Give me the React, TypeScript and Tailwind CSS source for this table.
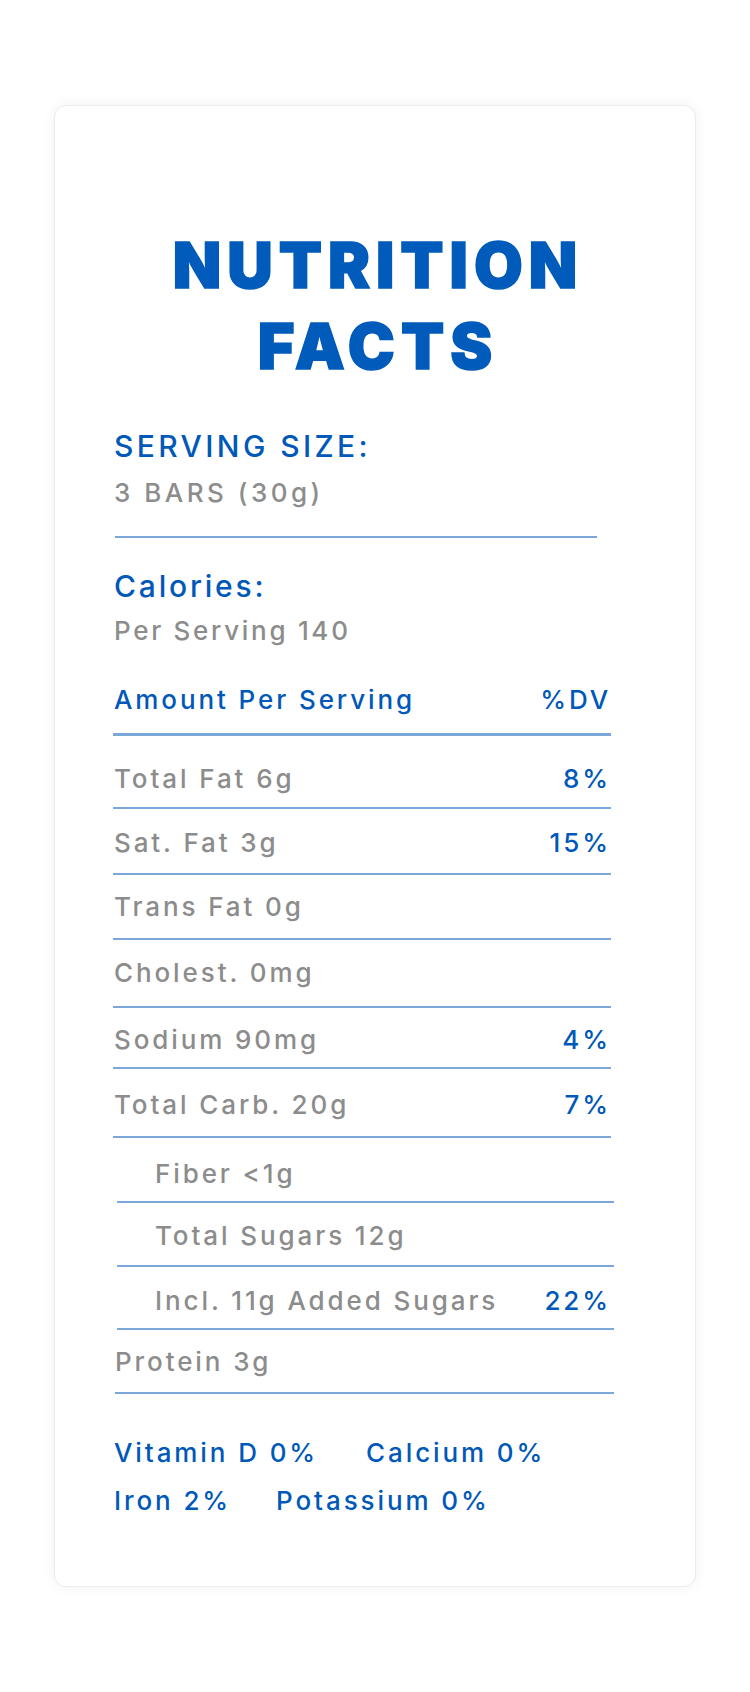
const rowsA = [
  { label: "Total Fat 6g", dv: "8%", h: "h-[73px] pt-[15px]" },
  { label: "Sat. Fat 3g", dv: "15%", h: "h-[66px] pt-[4px]" },
  { label: "Trans Fat 0g", dv: "", h: "h-[65px]" },
  { label: "Cholest. 0mg", dv: "", h: "h-[68px]" },
  { label: "Sodium 90mg", dv: "4%", h: "h-[61px] pt-[4px]" },
  { label: "Total Carb. 20g", dv: "7%", h: "h-[69px] pt-[4px]" },
];

const rowsB = [
  { label: "Fiber <1g", dv: "", h: "h-[65px] pt-[8px] pl-[38px]" },
  { label: "Total Sugars 12g", dv: "", h: "h-[64px] pt-[4px] pl-[38px]" },
  { label: "Incl. 11g Added Sugars", dv: "22%", h: "h-[63px] pt-[6px] pl-[38px]" },
  { label: "Protein 3g", dv: "", h: "h-[64px] pt-[2px] -ml-[2px]" },
];

const App = () => {
  return (
    <div className="min-h-[1692px] bg-white pt-[105px] pb-[105px] font-['Inter',sans-serif]">
      <section className="mx-[54px] h-[1482px] rounded-[12px] border border-[#ececec] bg-white shadow-[0_0_14px_rgba(0,0,0,0.06)] pl-[58px] pt-[119px]">
        <h1 className="pr-[58px] pl-[6px] text-center text-[63px] leading-[81px] font-black tracking-[6px] text-[#005bbb] [-webkit-text-stroke:1.5px_#005bbb]">
          NUTRITION
          <br />
          FACTS
        </h1>

        <div className="mt-[41px] pl-[1px]">
          <p className="text-[30px] leading-[36px] font-medium tracking-[3.4px] text-[#0058b8]">
            SERVING SIZE:
          </p>
          <p className="mt-[13px] text-[26px] leading-[32px] font-medium tracking-[3.5px] text-[#8c8c8c]">
            3 BARS (30g)
          </p>
        </div>
        <div className="mt-[27px] ml-[2px] h-[2px] w-[482px] bg-[#7ba7db]" />

        <div className="mt-[30px] pl-[1px]">
          <p className="text-[30px] leading-[36px] font-medium tracking-[2.8px] text-[#0058b8]">
            Calories:
          </p>
          <p className="mt-[11px] text-[26px] leading-[32px] font-medium tracking-[2.7px] text-[#8c8c8c]">
            Per Serving 140
          </p>
        </div>

        <div className="mt-[37px] w-[498px]">
          <div className="flex justify-between border-b-[3px] border-[#7ba7db] pb-[17px] pl-[1px] text-[26px] leading-[32px] font-medium tracking-[2.9px] text-[#0058b8]">
            <span>Amount Per Serving</span>
            <span>%DV</span>
          </div>
          {rowsA.map((r) => (
            <div
              key={r.label}
              className={`flex items-center justify-between border-b-2 border-[#7ba7db] pl-[1px] text-[26px] leading-[32px] font-medium tracking-[2.9px] ${r.h}`}
            >
              <span className="text-[#8c8c8c]">{r.label}</span>
              <span className="text-[#0058b8]">{r.dv}</span>
            </div>
          ))}
          <div className="ml-[4px] w-[497px]">
            {rowsB.map((r) => (
              <div
                key={r.label}
                className={`flex items-center justify-between border-b-2 border-[#7ba7db] pr-[3px] text-[26px] leading-[32px] font-medium tracking-[2.9px] ${r.h}`}
              >
                <span className="text-[#8c8c8c]">{r.label}</span>
                <span className="text-[#0058b8]">{r.dv}</span>
              </div>
            ))}
          </div>
        </div>

        <div className="mt-[35px] pl-[1px] text-[26px] leading-[48px] font-medium tracking-[2.9px] text-[#0058b8]">
          <div className="flex gap-x-[48px]">
            <span>Vitamin D 0%</span>
            <span>Calcium 0%</span>
          </div>
          <div className="flex gap-x-[45px]">
            <span>Iron 2%</span>
            <span>Potassium 0%</span>
          </div>
        </div>
      </section>
    </div>
  );
};

export default App;
